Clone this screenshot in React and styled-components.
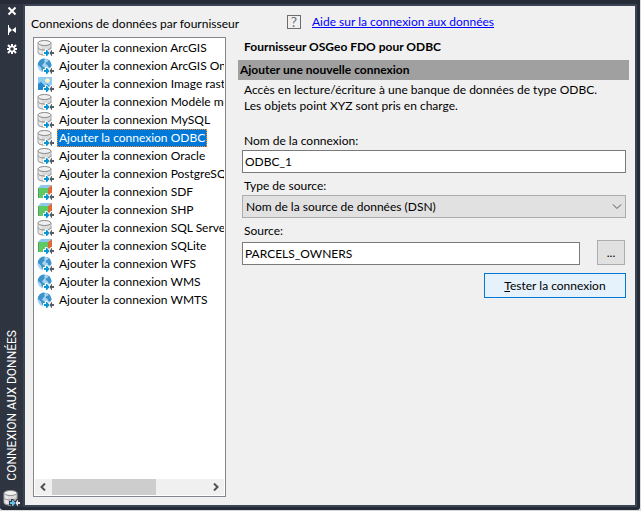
import { useState } from 'react';
import styled, { createGlobalStyle, css } from 'styled-components';

const providers = [
  { name: 'ArcGIS', icon: 'db' },
  { name: 'ArcGIS Online', icon: 'globe' },
  { name: 'Image raster ou surface', icon: 'image' },
  { name: 'Modèle métier', icon: 'db' },
  { name: 'MySQL', icon: 'db' },
  { name: 'ODBC', icon: 'db' },
  { name: 'Oracle', icon: 'db' },
  { name: 'PostgreSQL', icon: 'db' },
  { name: 'SDF', icon: 'cube' },
  { name: 'SHP', icon: 'cube' },
  { name: 'SQL Server', icon: 'db' },
  { name: 'SQLite', icon: 'cube' },
  { name: 'WFS', icon: 'globe' },
  { name: 'WMS', icon: 'globe' },
  { name: 'WMTS', icon: 'globe' },
];

function Database() {
  return (
    <>
      <path d="M1 3v10c0 1.300 2.600 2.500 6.500 2.500s6.500-1.200 6.500-2.500V3z" fill="#dadada" />
      <path d="M2 4v10M4 5v10" stroke="#f4f4f4" />
      <path d="M1 7.500c0 1.300 2.600 2.500 6.500 2.500s6.500-1.200 6.500-2.500M1 12.500c0 1.300 2.600 2.500 6.500 2.500" fill="none" stroke="#8a8a8a" />
      <ellipse cx="7.500" cy="3" rx="6.500" ry="2.500" fill="#f0f0f0" stroke="#8a8a8a" />
      <path d="M1 3v9.500M14 3v7" stroke="#a5a5a5" />
    </>
  );
}

function Globe() {
  return (
    <>
      <circle cx="7.500" cy="7.500" r="7" fill="#a5d3f0" />
      <path d="M1 5l2-3 3-1.500 2 .5-1 2 1 1-2 2-1 2 2 1 1 2-1 2.500-2-1-1-3-3-2.500z" fill="#3c93cc" />
      <path d="M10 1l3 2 1.500 4-1 3-2-1-1-2-2-1 1-2 2-.500z" fill="#3c93cc" />
    </>
  );
}

function Picture() {
  return (
    <>
      <path d="M1 1h14v13H1z" fill="#8ecbf5" />
      <circle cx="10.500" cy="4.500" r="2.300" fill="#fff3b8" />
      <path d="M1 8l3-2 4 4 2-2 5 4v2H1z" fill="#2489cb" />
    </>
  );
}

function Cube() {
  return (
    <>
      <path d="M1 4l3-3h11l-4 3z" fill="#8dc8ee" />
      <path d="M1 4h10v10H1z" fill="#5fca65" />
      <path d="M11 4l4-3v10l-4 3z" fill="#dd6b35" />
      <path d="M1.500 14V4.500" stroke="#48a750" />
    </>
  );
}

const drawings = { db: Database, globe: Globe, image: Picture, cube: Cube };

function ProviderIcon({ kind, light }) {
  const Drawing = drawings[kind];
  return (
    <svg width="17" height="17" viewBox="0 0 17 17" aria-hidden="true">
      <Drawing />
      <path d="M6 11h2V9h2l2 2 2-2h2v2h1v5h-1v1h-2l-2-2-2 2H8v-2H6z" fill={light ? '#2e3440' : '#fff'} />
      <path d="M7 12h2v-2h1l2.500 3-2.500 3H9v-2H7z" fill={light ? '#68bdf2' : '#0696d7'} />
      <path d="M17 12h-2v-2h-.500l-2 3 2 3h.500v-2h2z" fill={light ? '#e4e4e4' : '#5c5c5c'} />
    </svg>
  );
}

function App() {
  const [selected, setSelected] = useState('ODBC');
  const [name, setName] = useState('ODBC_1');
  const [source, setSource] = useState('PARCELS_OWNERS');

  return (
    <>
      <GlobalStyle />
      <Palette>
        <TitleBar>
          <TitleButtons>
            <TitleButton aria-label="Fermer">
              <svg width="10" height="10" viewBox="0 0 10 10">
                <path d="M1.500 1.500l7 7M8.500 1.500l-7 7" stroke="#fff" strokeWidth="2" />
              </svg>
            </TitleButton>
            <TitleButton aria-label="Masquer automatiquement">
              <svg width="10" height="10" viewBox="0 0 10 10">
                <path d="M1 0h1v10H1zM2 2l3 3-3 3zM9 2v6L5 5z" fill="#fff" />
              </svg>
            </TitleButton>
            <TitleButton aria-label="Propriétés">
              <svg width="10" height="10" viewBox="0 0 10 10">
                <path d="M5 0v3M5 7v3M0 5h3M7 5h3M1 1l2 2M7 7l2 2M9 1L7 3M3 7L1 9" stroke="#fff" strokeWidth="2" />
                <circle cx="5" cy="5" r="2.500" fill="none" stroke="#fff" strokeWidth="1.500" />
              </svg>
            </TitleButton>
          </TitleButtons>
          <Title>CONNEXION AUX DONNÉES</Title>
          <ProviderIcon kind="db" light />
        </TitleBar>

        <Content>
          <ListColumn>
            <ListTitle>Connexions de données par fournisseur</ListTitle>
            <ListBox>
              <List>
                {providers.map((p) => (
                  <Item key={p.name} onClick={() => setSelected(p.name)}>
                    <ProviderIcon kind={p.icon} />
                    <ItemText $selected={p.name === selected}>
                      Ajouter la connexion {p.name}
                    </ItemText>
                  </Item>
                ))}
              </List>
              <ScrollBar>
                <ScrollButton aria-label="Gauche">
                  <svg width="7" height="8" viewBox="0 0 7 8">
                    <path d="M5 .500L1.500 4 5 7.500" fill="none" stroke="#505050" strokeWidth="2" />
                  </svg>
                </ScrollButton>
                <Track><Thumb /></Track>
                <ScrollButton aria-label="Droite">
                  <svg width="7" height="8" viewBox="0 0 7 8">
                    <path d="M2 .500L5.500 4 2 7.500" fill="none" stroke="#505050" strokeWidth="2" />
                  </svg>
                </ScrollButton>
              </ScrollBar>
            </ListBox>
          </ListColumn>

          <Details>
            <Help>
              <HelpIcon>?</HelpIcon>
              <a href="#aide">Aide sur la connexion aux données</a>
            </Help>
            <Heading>Fournisseur OSGeo FDO pour ODBC</Heading>
            <SectionBar>Ajouter une nouvelle connexion</SectionBar>
            <Description>
              Accès en lecture/écriture à une banque de données de type ODBC.
              <br />
              Les objets point XYZ sont pris en charge.
            </Description>
            <Form onSubmit={(e) => e.preventDefault()}>
              <Label htmlFor="name">Nom de la connexion:</Label>
              <Input id="name" value={name} onChange={(e) => setName(e.target.value)} />
              <Label htmlFor="type">Type de source:</Label>
              <SelectWrap>
                <Select id="type">
                  <option>Nom de la source de données (DSN)</option>
                </Select>
                <Chevron width="10" height="6" viewBox="0 0 10 6">
                  <path d="M1 .500l4 4 4-4" fill="none" stroke="#505050" />
                </Chevron>
              </SelectWrap>
              <Label htmlFor="source">Source:</Label>
              <SourceRow>
                <Input id="source" value={source} onChange={(e) => setSource(e.target.value)} />
                <BrowseButton type="button">...</BrowseButton>
              </SourceRow>
              <TestButton type="submit"><u>T</u>ester la connexion</TestButton>
            </Form>
          </Details>
        </Content>
      </Palette>
    </>
  );
}

export default App;

const GlobalStyle = createGlobalStyle`
  * {
    box-sizing: border-box;
  }
  body {
    margin: 0;
    background: #d8d9db;
    color: #000;
    font: 12px/16px Lato, "Open Sans", sans-serif;
  }
  button, input, select {
    font: inherit;
    color: inherit;
    margin: 0;
    border-radius: 0;
  }
  svg {
    display: block;
    flex: none;
  }
`;

const Palette = styled.div`
  display: flex;
  height: calc(100vh - 1px);
  margin-right: 1px;
  padding: 4px 3px 3px 0;
  background: #252b37;
  border-radius: 0 0 3px 3px;
`;

const TitleBar = styled.div`
  width: 23px;
  display: flex;
  flex-direction: column;
  align-items: center;
  background: #2e3440;
`;

const TitleButtons = styled.div`
  display: flex;
  flex-direction: column;
  gap: 9px;
  padding-top: 2px;
  margin-bottom: auto;
`;

const TitleButton = styled.button`
  padding: 0;
  border: 0;
  background: none;
`;

const Title = styled.div`
  writing-mode: vertical-rl;
  transform: rotate(180deg);
  color: #fff;
  font-family: Roboto, "Open Sans", sans-serif;
  margin-bottom: 9px;
`;

const Content = styled.div`
  flex: 1;
  min-width: 0;
  display: flex;
  gap: 12px;
  padding: 8px 6px 8px 8px;
  border: 2px solid #3b4453;
  background: #f0f0f0;
`;

const ListColumn = styled.div`
  width: 193px;
  flex: none;
  display: flex;
  flex-direction: column;
`;

const ListTitle = styled.div`
  padding-top: 2px;
  margin: 0 -12px 5px -2px;
  white-space: nowrap;
`;

const ListBox = styled.div`
  flex: 1;
  min-height: 0;
  display: flex;
  flex-direction: column;
  padding: 1px;
  border: 1px solid #828790;
  background: #fff;
`;

const List = styled.ul`
  flex: 1;
  margin: 0;
  padding: 0;
  list-style: none;
  overflow: hidden;
`;

const Item = styled.li`
  height: 18px;
  display: flex;
  align-items: center;
  gap: 3px;
  padding-left: 2px;
  white-space: nowrap;
`;

const ItemText = styled.span`
  padding: 0 1px;
  border: 1px solid transparent;
  ${(props) => props.$selected && css`
    color: #fff;
    background: #0078d7;
    border: 1px dotted #ff8728;
  `}
`;

const ScrollBar = styled.div`
  height: 16px;
  display: flex;
  background: #f0f0f0;
`;

const ScrollButton = styled.button`
  width: 17px;
  display: flex;
  align-items: center;
  justify-content: center;
  padding: 0;
  border: 0;
  background: none;
`;

const Track = styled.div`
  flex: 1;
`;

const Thumb = styled.div`
  width: 67%;
  height: 100%;
  background: #cdcdcd;
`;

const Details = styled.div`
  flex: 1;
  min-width: 0;
`;

const Help = styled.div`
  display: flex;
  align-items: center;
  gap: 11px;
  padding-left: 49px;

  a {
    color: #00f;
  }
`;

const HelpIcon = styled.span`
  width: 14px;
  height: 14px;
  border: 1px solid #6d6d6d;
  color: #6d6d6d;
  font-size: 14px;
  line-height: 12px;
  text-align: center;
`;

const Heading = styled.h1`
  margin: 9px 6px 5px;
  font-size: 12px;
  line-height: 16px;
`;

const SectionBar = styled.h2`
  margin: 0;
  padding: 0 2px;
  background: #a0a0a0;
  font-size: 12px;
  line-height: 20px;
`;

const Description = styled.p`
  margin: 2px 6px 19px;
`;

const Form = styled.form`
  display: flex;
  flex-direction: column;
  padding: 0 3px 0 4px;
`;

const Label = styled.label`
  padding-left: 2px;
  margin-bottom: 1px;
`;

const Input = styled.input`
  width: 100%;
  height: 23px;
  padding: 0 2px;
  margin-bottom: 5px;
  border: 1px solid #7a7a7a;
  background: #fff;
  outline: none;
`;

const SelectWrap = styled.div`
  position: relative;
  margin-bottom: 5px;
`;

const Select = styled.select`
  display: block;
  width: 100%;
  height: 23px;
  padding: 0 3px;
  appearance: none;
  border: 1px solid #adadad;
  background: #e1e1e1;
`;

const Chevron = styled.svg`
  position: absolute;
  right: 4px;
  top: 9px;
  pointer-events: none;
`;

const SourceRow = styled.div`
  display: flex;
  align-items: flex-end;
  gap: 17px;
  padding-right: 1px;

  input {
    flex: 1;
    min-width: 0;
    margin: 0;
  }
`;

const Button = styled.button`
  height: 25px;
  padding: 0;
  border: 1px solid #adadad;
  background: #e1e1e1;
`;

const BrowseButton = styled(Button)`
  width: 28px;
`;

const TestButton = styled(Button)`
  width: 142px;
  align-self: flex-end;
  margin-top: 8px;
  border-color: #0078d7;
  background: #e5f1fb;
`;
